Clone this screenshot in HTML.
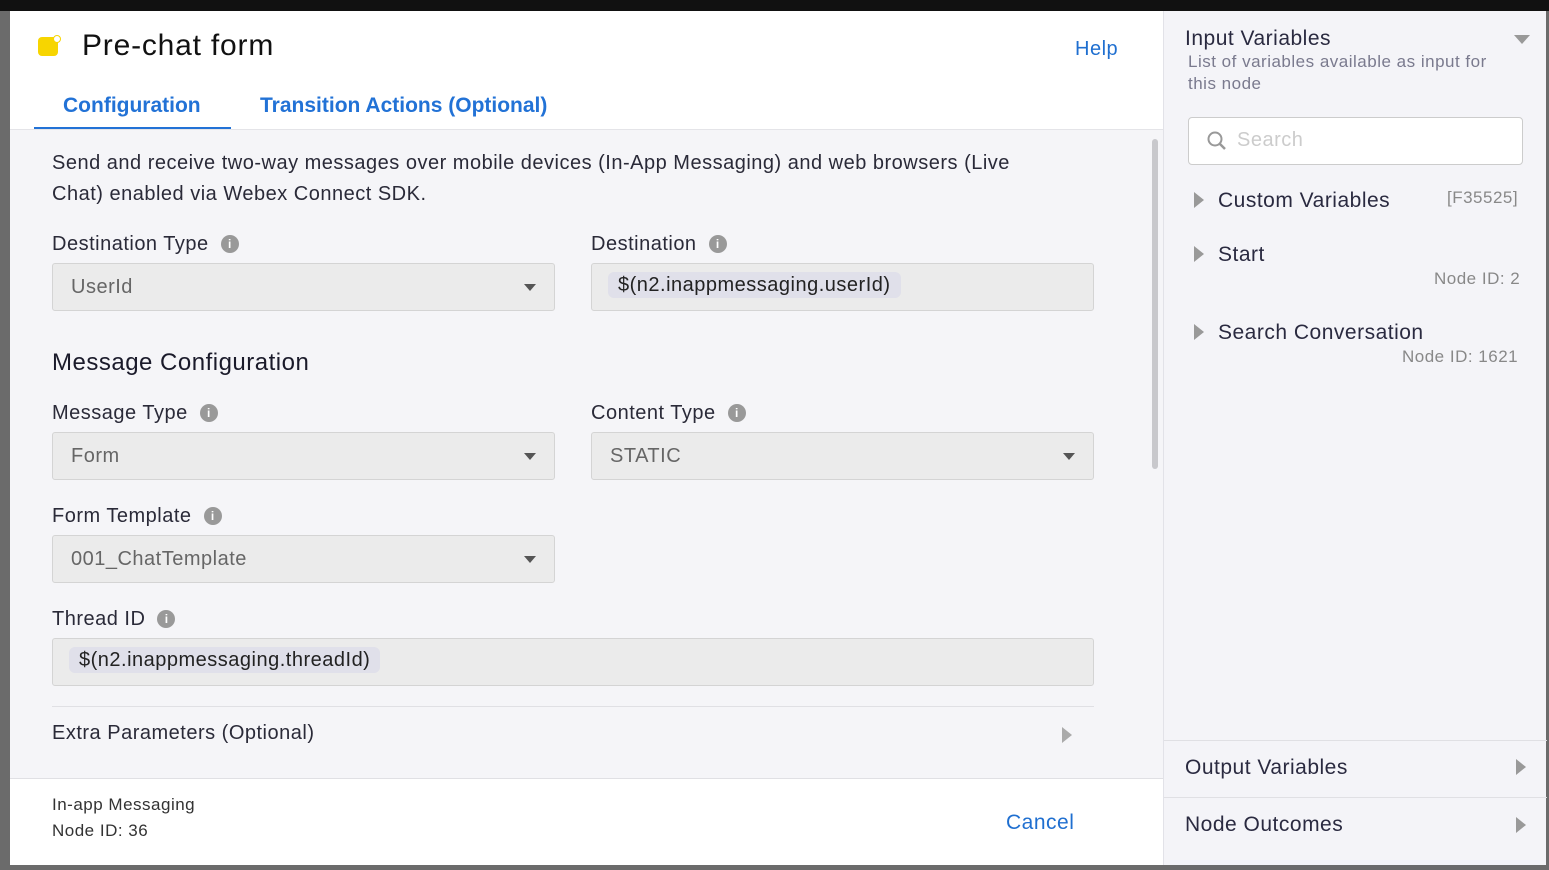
<!DOCTYPE html>
<html><head><style>
*{box-sizing:border-box;margin:0;padding:0}
body{width:1549px;height:870px;position:relative;overflow:hidden;background:#6b6b6b;font-family:"Liberation Sans",sans-serif;color:#1a1a2a;letter-spacing:0.5px}
.top{position:absolute;left:0;top:0;width:1549px;height:11px;background:#111}
.modal{position:absolute;left:10px;top:11px;width:1536px;height:854px;background:#fff}
.abs{position:absolute}
.lbl{position:absolute;font-size:20px;color:#2a2a38}
.info{display:inline-block;width:18px;height:18px;border-radius:50%;background:#999;color:#fff;font-size:12px;text-align:center;line-height:18px;font-weight:bold;vertical-align:2px;margin-left:12px;letter-spacing:0}
.sel{position:absolute;height:48px;background:#ebebeb;border:1px solid #d4d4d4;border-radius:3px;font-size:20px;color:#666;padding:12px 18px}
.sel .car{position:absolute;right:18px;top:20px;border-left:6px solid transparent;border-right:6px solid transparent;border-top:7px solid #555}
.chip{background:#e0e0ea;border-radius:6px;padding:2px 10px;color:#222}
.rp{position:absolute;left:1153px;top:0;width:383px;height:854px;background:#f4f4f8;border-left:1px solid #e2e2e8}
.tri{position:absolute;border-top:8px solid transparent;border-bottom:8px solid transparent;border-left:10px solid #999}
</style></head><body>
<div class="top"></div>
<div class="modal">
  <div class="abs" style="left:28px;top:26px;width:20px;height:19px;background:#f7d500;border-radius:4px"></div>
  <div class="abs" style="left:43px;top:24px;width:8px;height:8px;background:#fff;border-radius:50%;border:1px solid #f7d500"></div>
  <div class="abs" style="left:72px;top:18px;font-size:30px;color:#111;letter-spacing:0.8px">Pre-chat form</div>
  <div class="abs" style="left:1065px;top:27px;font-size:20px;color:#1f6fd0">Help</div>
  <div class="abs" style="left:53px;top:83px;font-size:21px;font-weight:bold;color:#2272d6;letter-spacing:0">Configuration</div>
  <div class="abs" style="left:250px;top:83px;font-size:21px;font-weight:bold;color:#2272d6;letter-spacing:0">Transition Actions (Optional)</div>
  <div class="abs" style="left:24px;top:116px;width:197px;height:4px;background:#2272d6"></div>
  <div class="abs" style="left:0;top:118px;width:1153px;height:649px;background:#f5f5f8;border-top:1px solid #e4e4e8"></div>
  <div class="abs" style="left:1142px;top:128px;width:6px;height:330px;background:#c8c8cc;border-radius:3px"></div>
  <div class="abs" style="left:42px;top:137px;width:1015px;font-size:20px;line-height:31px;color:#2a2a38">Send and receive two-way messages over mobile devices (In-App Messaging) and web browsers (Live Chat) enabled via Webex Connect SDK.</div>
  <div class="lbl" style="left:42px;top:222px">Destination Type<span class="info">i</span></div>
  <div class="lbl" style="left:581px;top:222px">Destination<span class="info">i</span></div>
  <div class="sel" style="left:42px;top:252px;width:503px">UserId<span class="car"></span></div>
  <div class="sel" style="left:581px;top:252px;width:503px;padding:10px 16px;color:#222"><span class="chip">$(n2.inappmessaging.userId)</span></div>
  <div class="abs" style="left:42px;top:338px;font-size:24px;color:#1a1a2a">Message Configuration</div>
  <div class="lbl" style="left:42px;top:391px">Message Type<span class="info">i</span></div>
  <div class="lbl" style="left:581px;top:391px">Content Type<span class="info">i</span></div>
  <div class="sel" style="left:42px;top:421px;width:503px">Form<span class="car"></span></div>
  <div class="sel" style="left:581px;top:421px;width:503px">STATIC<span class="car"></span></div>
  <div class="lbl" style="left:42px;top:494px">Form Template<span class="info">i</span></div>
  <div class="sel" style="left:42px;top:524px;width:503px">001_ChatTemplate<span class="car"></span></div>
  <div class="lbl" style="left:42px;top:597px">Thread ID<span class="info">i</span></div>
  <div class="sel" style="left:42px;top:627px;width:1042px;padding:10px 16px;color:#222"><span class="chip">$(n2.inappmessaging.threadId)</span></div>
  <div class="abs" style="left:42px;top:695px;width:1042px;height:1px;background:#e0e0e4"></div>
  <div class="lbl" style="left:42px;top:711px">Extra Parameters (Optional)</div>
  <div class="tri" style="left:1052px;top:716px;border-left-color:#aaa"></div>
  <div class="abs" style="left:0;top:767px;width:1153px;height:1px;background:#e0e0e4"></div>
  <div class="abs" style="left:42px;top:781px;font-size:17px;line-height:26px;color:#333">In-app Messaging<br>Node ID: 36</div>
  <div class="abs" style="left:996px;top:800px;font-size:21px;color:#1f6fd0">Cancel</div>
  <div class="rp">
    <div class="abs" style="left:21px;top:16px;font-size:21px;color:#2a2a40">Input Variables</div>
    <div class="abs" style="left:350px;top:24px;border-left:8px solid transparent;border-right:8px solid transparent;border-top:9px solid #999"></div>
    <div class="abs" style="left:24px;top:40px;width:320px;font-size:17px;line-height:22px;color:#7a7a8e">List of variables available as input for this node</div>
    <div class="abs" style="left:24px;top:106px;width:335px;height:48px;background:#fff;border:1px solid #ccc;border-radius:4px"></div>
    <svg class="abs" style="left:42px;top:119px" width="22" height="22" viewBox="0 0 22 22"><circle cx="9" cy="9" r="6.5" fill="none" stroke="#999" stroke-width="2"/><line x1="14" y1="14" x2="19" y2="19" stroke="#999" stroke-width="2.5"/></svg>
    <div class="abs" style="left:73px;top:118px;font-size:20px;color:#ccc">Search</div>
    <div class="tri" style="left:30px;top:181px"></div>
    <div class="abs" style="left:54px;top:178px;font-size:21px;color:#2a2a40">Custom Variables</div>
    <div class="abs" style="left:283px;top:177px;font-size:17px;color:#888">[F35525]</div>
    <div class="tri" style="left:30px;top:235px"></div>
    <div class="abs" style="left:54px;top:232px;font-size:21px;color:#2a2a40">Start</div>
    <div class="abs" style="left:270px;top:258px;font-size:17px;color:#888">Node ID: 2</div>
    <div class="tri" style="left:30px;top:313px"></div>
    <div class="abs" style="left:54px;top:310px;font-size:21px;color:#2a2a40">Search Conversation</div>
    <div class="abs" style="left:238px;top:336px;font-size:17px;color:#888">Node ID: 1621</div>
    <div class="abs" style="left:0;top:729px;width:383px;height:1px;background:#e0e0e4"></div>
    <div class="abs" style="left:21px;top:745px;font-size:21px;color:#2a2a40">Output Variables</div>
    <div class="tri" style="left:352px;top:748px"></div>
    <div class="abs" style="left:0;top:786px;width:383px;height:1px;background:#e0e0e4"></div>
    <div class="abs" style="left:21px;top:802px;font-size:21px;color:#2a2a40">Node Outcomes</div>
    <div class="tri" style="left:352px;top:806px"></div>
  </div>
</div>
</body></html>
